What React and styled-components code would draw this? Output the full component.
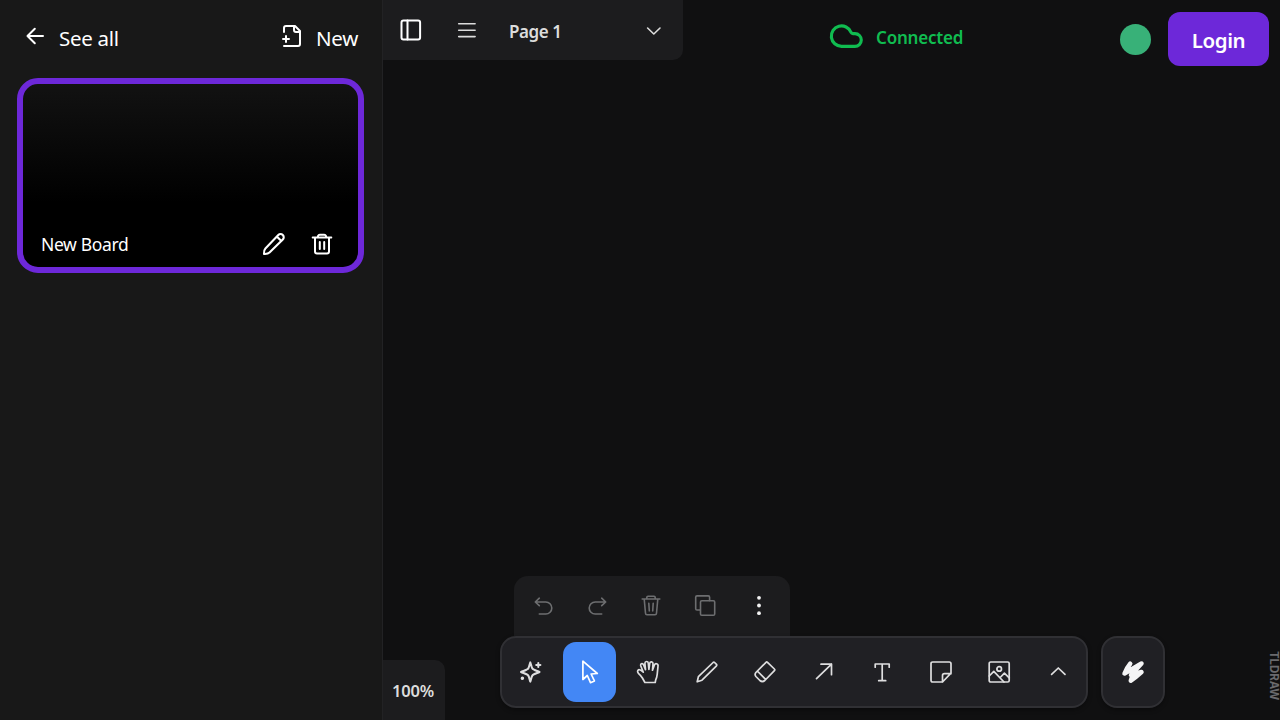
import React from "react";
import styled, { createGlobalStyle } from "styled-components";

const Global = createGlobalStyle`
  * { box-sizing: border-box; }
  body { margin: 0; background: #101011; overflow: hidden; }
  button { border: 0; background: none; padding: 0; margin: 0; font: inherit; color: inherit; }
`;

const Shell = styled.div`
  display: flex;
  width: 1280px;
  height: 720px;
  background: #101011;
  color: #fff;
  font-family: "Noto Sans", "Open Sans", sans-serif;
`;

const Sidebar = styled.aside`
  width: 383px;
  flex: none;
  background: #181818;
  border-right: 1px solid #222224;
  padding: 16px 18px 0 17px;
`;

const SidebarHeader = styled.header`
  display: flex;
  justify-content: space-between;
  height: 62px;
  padding: 0 6px 0 6px;
`;

const HeaderLink = styled.button`
  display: flex;
  align-items: center;
  gap: 12px;
  height: 40px;
`;

const Label = styled.span`
  display: block;
  font-size: ${(p) => p.$size}px;
  font-weight: ${(p) => p.$weight || 400};
  letter-spacing: ${(p) => p.$track || 0}px;
  line-height: 24px;
  white-space: nowrap;
  padding-top: ${(p) => p.$drop || 0}px;
`;

const Card = styled.article`
  display: flex;
  align-items: flex-end;
  width: 347px;
  height: 195px;
  border: 6px solid #6d28d9;
  border-radius: 21px;
  background: linear-gradient(#121212, #000 65%);
`;

const CardFooter = styled.footer`
  display: flex;
  align-items: center;
  width: 100%;
  height: 46px;
  padding: 0 24px 0 18px;
`;

const CardActions = styled.div`
  display: flex;
  gap: 24px;
  margin-left: auto;
`;

const Main = styled.main`
  flex: 1;
  display: flex;
  flex-direction: column;
  justify-content: space-between;
`;

const TopBar = styled.header`
  display: flex;
  align-items: flex-start;
`;

const PageMenu = styled.nav`
  display: flex;
  align-items: center;
  width: 300px;
  height: 60px;
  padding: 0 17px 0 16px;
  background: #1c1c1e;
  border-radius: 0 0 10px 0;
  color: #dcdcdc;
`;

const PageSelect = styled.button`
  display: flex;
  flex: 1;
  align-items: center;
  justify-content: space-between;
  margin-left: 30px;
`;

const PanelButton = styled.button`
  display: flex;
  color: #fff;
`;

const MenuButton = styled.button`
  display: flex;
  margin-left: 32px;
`;

const Status = styled.div`
  display: flex;
  align-items: center;
  gap: 12px;
  height: 72px;
  margin-left: 145px;
  color: #10bc50;
`;

const Account = styled.div`
  display: flex;
  align-items: center;
  gap: 17px;
  margin: 12px 11px 0 auto;
`;

const Avatar = styled.span`
  width: 31px;
  height: 31px;
  border-radius: 50%;
  background: #38b178;
`;

const LoginButton = styled.button`
  width: 101px;
  height: 54px;
  border-radius: 12px;
  background: #6d28d9;
`;

const BottomBar = styled.footer`
  display: flex;
  align-items: flex-end;
`;

const ZoomBox = styled.div`
  display: flex;
  align-items: center;
  justify-content: center;
  width: 62px;
  height: 60px;
  padding-right: 2px;
  background: #1c1c1e;
  border-radius: 0 10px 0 0;
  color: #dcdcdc;
`;

const Dock = styled.div`
  margin-left: 55px;
`;

const QuickActions = styled.div`
  display: flex;
  align-items: center;
  width: 276px;
  height: 60px;
  margin-left: 14px;
  padding: 0 4px 1px 3px;
  background: #1c1c1e;
  border-radius: 14px 14px 0 0;
  color: #6d6e70;
`;

const ActionButton = styled.button`
  display: flex;
  justify-content: center;
  flex: 1;
  color: ${(p) => (p.$active ? "#f2f2f2" : "inherit")};
`;

const ToolRow = styled.div`
  display: flex;
  gap: 13px;
  padding-bottom: 12px;
`;

const ToolPanel = styled.div`
  display: flex;
  align-items: center;
  justify-content: center;
  gap: 5.6px;
  width: ${(p) => p.$width}px;
  height: 72px;
  padding-left: ${(p) => p.$inset || 0}px;
  background: #202024;
  border: 2px solid #303034;
  border-radius: 16px;
  box-shadow: 0 2px 4px rgba(0, 0, 0, 0.35);
  color: ${(p) => p.$tint || "#dededf"};
`;

const Tool = styled.button`
  display: flex;
  align-items: center;
  justify-content: center;
  width: 53px;
  height: 60px;
  border-radius: 13px;
  background: ${(p) => (p.$selected ? "#4387f5" : "transparent")};
  color: ${(p) => (p.$selected ? "#fff" : "inherit")};
`;

const Watermark = styled.div`
  writing-mode: vertical-rl;
  margin: 0 -1px 20px auto;
  font: 700 11.5px/14px Inter, sans-serif;
  letter-spacing: -0.1px;
  color: #6a6a6d;
`;

const Glyph = styled.svg`
  display: block;
  flex: none;
  fill: none;
  stroke: currentColor;
  stroke-width: ${(p) => p.$stroke || 1.6};
  stroke-linecap: round;
  stroke-linejoin: round;
`;

const drawings = {
  back: <path d="M20 12H4.500M11.800 4.700 4.500 12l7.300 7.300" />,
  newFile: <path d="M4 22h14a2 2 0 0 0 2-2V7l-5-5H6a2 2 0 0 0-2 2v4M14 2v4a2 2 0 0 0 2 2h4M3 15h6M6 12v6" />,
  rename: <path d="M2 22c-.2-2.500.2-4.300 1.400-5.500L16.300 3.100a3.100 3.100 0 0 1 4.500 4.500L7.500 20.600C6.300 21.800 4.500 22.200 2 22ZM15 4.700l4.400 4.400" />,
  remove: <path d="M2.700 5.500h18.600M5 5.500v14a2 2 0 0 0 2 2h10a2 2 0 0 0 2-2v-14M7.700 5l.5-1.300q.3-1 1.600-1h4.400q1.300 0 1.600 1l.5 1.300M9.800 9.900v7M14.200 9.900v7" />,
  panel: <><rect x="2.500" y="2.500" width="18.600" height="19" rx="2" /><path d="M8.500 2.500v19" /></>,
  menu: <path d="M3.700 5.700h16.400M3.700 12.200h16.400M3.700 18.600h16.400" />,
  down: <path d="m5.600 10 6.200 6 6.200-6" />,
  up: <path d="m5.600 14.300 6.700-6.300 6.700 6.300" />,
  cloud: <path d="M17.900 18.900H9a6.800 6.800 0 1 1 6.300-9.400q.5.900 1.300.9h1.400a4.200 4.200 0 0 1-.1 8.500Z" />,
  undo: <path d="M7.300 4.200 3.300 8l4 3.700M3.300 8h10.500a6 6 0 0 1 0 12H7.300" />,
  redo: <path d="m15.700 4.200 4 3.800-4 3.700M19.700 8H9.200a6 6 0 0 0 0 12h6.500" />,
  trash: <path d="M3.200 5h17.600M7.800 4.700V3.500q0-1.200 1.200-1.200h6q1.200 0 1.200 1.200v1.200M5.200 5l1.300 14.200q.1 1.500 1.500 1.500h8q1.400 0 1.500-1.500L18.800 5M9.800 9.300l.5 7.600M14.200 9.300l-.5 7.600" />,
  copy: <><rect x="7.500" y="6.800" width="14.200" height="14.400" rx="1.300" /><path d="M7.300 16H4q-1.300 0-1.300-1.300V3.200q0-1.300 1.300-1.300h11.300q1.300 0 1.300 1.300v3.400" /></>,
  more: <g fill="currentColor" stroke="none"><circle cx="12" cy="3.800" r="1.900" /><circle cx="12" cy="11.500" r="1.900" /><circle cx="12" cy="19.200" r="1.900" /></g>,
  sparkle: <><path strokeWidth="2" d="M11.300 2.300c.6 1.400 1 4.500 2 6.100.9 1.400 4.900 2.500 7.200 3.600-2.300 1.100-6.300 2.200-7.200 3.600-1 1.600-1.400 4.700-2 6.100-.6-1.400-1-4.500-2-6.100C8.400 14.200 4.300 13.100 2 12c2.300-1.100 6.400-2.200 7.300-3.600 1-1.600 1.400-4.700 2-6.100Z" /><path strokeWidth="2" d="M19.300 2.900v4.200M17.200 5h4.200" /><circle cx="3.400" cy="18.200" r=".9" fill="currentColor" /></>,
  select: <path d="M4.900 1.200v18.300l4.400-4 3.200 7.200 3.900-1.800-3.300-6.900 6.200-.5Z" />,
  hand: <g transform="translate(.9 0)"><path d="M8 22.500 5.500 18Q4 15.500 1.500 13.300-.2 11 1.700 9.800 3 9.200 6.400 12.200L3.800 5.700q-.3-2.100 1.400-2.100 1 0 1.600 1.500l1.800 4.600L8 3.300q.1-1.800 1.700-1.800 1.500 0 1.700 1.700l.6 6.200.8-6.100q.4-1.600 1.900-1.400 1.500.3 1.400 1.900l-.5 6.400L17.500 5q.8-1.700 2.200-1.200 1.800.6 1.400 2.500l-.8 8q-.3 3-1.500 5.500l-.5 2.700Z" /></g>,
  draw: <path d="m2.200 21.800 1.200-5.100L18.100 2.500q.8-.7 1.500 0l1.900 1.900q.7.800 0 1.500L7 20.200Z" />,
  eraser: <path d="m14.500 2.300 6.900 6.700q.8.800 0 1.600l-9.600 9.900q-2.400 2-4.900 0l-4-4q-1.600-2 0-4L13 2.300q.7-.7 1.500 0ZM4.300 11l8.300 8.400" />,
  arrow: <path d="m4.500 18.700 15-14.500M9 4.200h10.500v10.500" />,
  text: <path d="M5.200 7.200V4h14v3.200M12.200 4v16.700M8.700 20.700h7" />,
  note: <path d="M13.500 22H3.700Q2 22 2 20.300V3.700Q2 2 3.700 2h16.600Q22 2 22 3.700v9.500L13.500 22v-6.300q0-2 2-2H22" />,
  image: <g transform="translate(-.8 0)"><rect x="2" y="2" width="20" height="20" rx="1.500" /><circle cx="12" cy="8.900" r="2.300" /><path d="m2 16 4.600-4.600L16.800 22M13 17.500l4.200-4.300 4.800 4.700" /></g>,
  scribble: <path strokeWidth="4.500" d="M9.200 3.700Q6 7.500 3.500 13.500L20.500 3.500Q15 9.500 10 15L20.500 12Q15 17 9.800 20.700L12 14" />,
};

function Icon({ name, size = 24, stroke }) {
  return (
    <Glyph viewBox="0 0 24 24" width={size} height={size} $stroke={stroke}>
      {drawings[name]}
    </Glyph>
  );
}

const tools = ["sparkle", "select", "hand", "draw", "eraser", "arrow", "text", "note", "image", "up"];

export default function App() {
  return (
    <Shell>
      <Global />
      <Sidebar>
        <SidebarHeader>
          <HeaderLink>
            <Icon name="back" stroke={2} />
            <Label $size={20.5} $track={-0.3} $drop={4}>See all</Label>
          </HeaderLink>
          <HeaderLink>
            <Icon name="newFile" stroke={2} />
            <Label $size={20.5} $track={-0.3} $drop={4}>New</Label>
          </HeaderLink>
        </SidebarHeader>
        <Card>
          <CardFooter>
            <Label $size={17.5} $track={-0.35}>New Board</Label>
            <CardActions>
              <Icon name="rename" stroke={2.1} />
              <Icon name="remove" stroke={2} />
            </CardActions>
          </CardFooter>
        </Card>
      </Sidebar>
      <Main>
        <TopBar>
          <PageMenu>
            <PanelButton><Icon name="panel" stroke={2} /></PanelButton>
            <MenuButton><Icon name="menu" /></MenuButton>
            <PageSelect>
              <Label $size={17} $weight={600} $track={-0.45} $drop={4}>Page 1</Label>
              <Icon name="down" />
            </PageSelect>
          </PageMenu>
          <Status>
            <Icon name="cloud" size={36} stroke={2.1} />
            <Label $size={17} $weight={600} $track={-0.2} $drop={4}>Connected</Label>
          </Status>
          <Account>
            <Avatar />
            <LoginButton><Label $size={20.5} $weight={600} $track={-0.4} $drop={2}>Login</Label></LoginButton>
          </Account>
        </TopBar>
        <BottomBar>
          <ZoomBox><Label $size={16.5} $weight={600} $track={-0.2} $drop={2}>100%</Label></ZoomBox>
          <Dock>
            <QuickActions>
              <ActionButton><Icon name="undo" /></ActionButton>
              <ActionButton><Icon name="redo" /></ActionButton>
              <ActionButton><Icon name="trash" /></ActionButton>
              <ActionButton><Icon name="copy" /></ActionButton>
              <ActionButton $active><Icon name="more" /></ActionButton>
            </QuickActions>
            <ToolRow>
              <ToolPanel $width={588} $inset={1.2}>
                {tools.map((name) => (
                  <Tool key={name} $selected={name === "select"}>
                    <Icon name={name} stroke={1.7} />
                  </Tool>
                ))}
              </ToolPanel>
              <ToolPanel $width={64} $tint="#f4f4f5"><Icon name="scribble" /></ToolPanel>
            </ToolRow>
          </Dock>
          <Watermark>TLDRAW</Watermark>
        </BottomBar>
      </Main>
    </Shell>
  );
}
